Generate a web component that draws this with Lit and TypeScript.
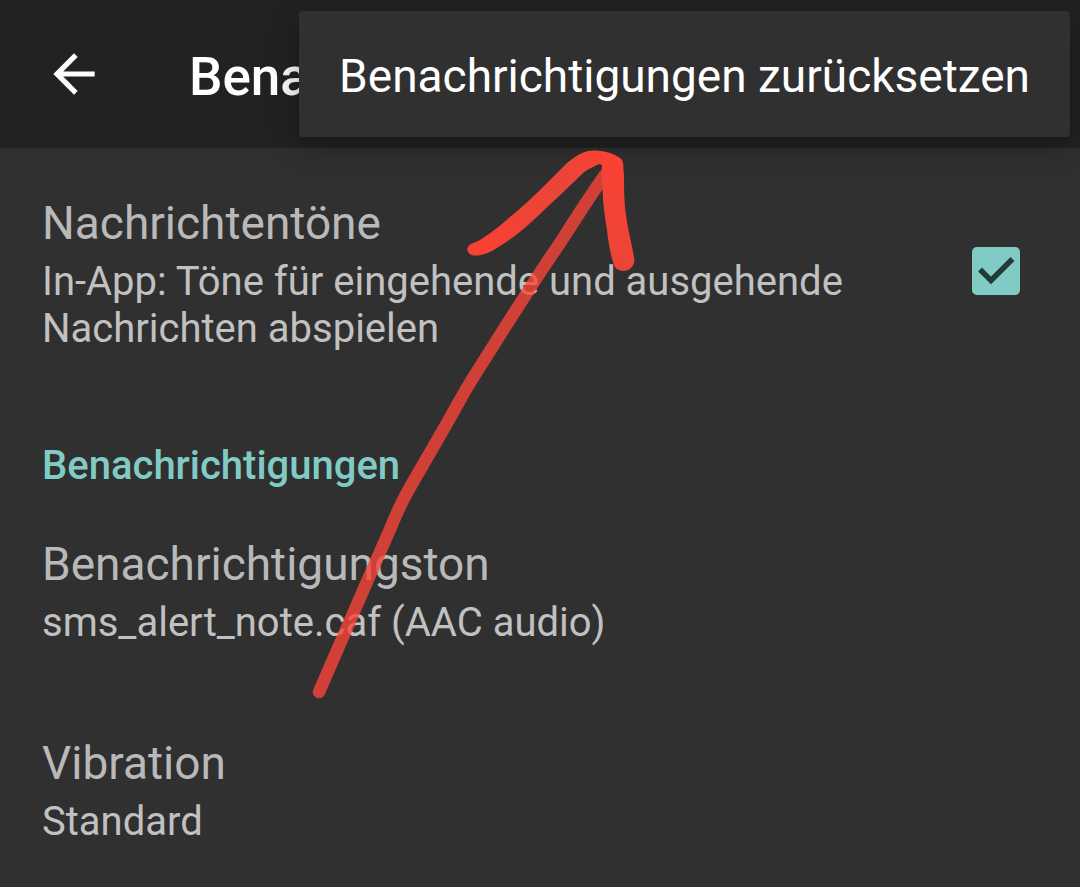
import { LitElement, html, css } from "lit";
import { customElement, property, state } from "lit/decorators.js";

@customElement("preference-text")
class PreferenceText extends LitElement {
  @property() heading = "";
  @property() summary = "";

  static styles = css`
    :host {
      display: flex;
      flex-direction: column;
      gap: 8px;
      flex: 1;
      min-width: 0;
    }
    .heading {
      font-size: 46px;
      line-height: 54px;
      color: #b9b9b9;
    }
    .summary {
      font-size: 40px;
      line-height: 47px;
      color: #c1c1c1;
    }
  `;

  render() {
    return html`
      <span class="heading">${this.heading}</span>
      <span class="summary">${this.summary}</span>
    `;
  }
}

@customElement("app-root")
class AppRoot extends LitElement {
  @state() private sounds = true;

  static styles = css`
    :host {
      display: block;
      position: relative;
      min-height: 100vh;
      background: #303030;
      color: #fff;
      font-family: Roboto, "Noto Sans", sans-serif;
    }
    button {
      border: 0;
      padding: 0;
      background: none;
      color: inherit;
      font: inherit;
      text-align: left;
      cursor: pointer;
    }
    .bar {
      display: flex;
      align-items: center;
      gap: 84px;
      height: 148px;
      padding: 0 43px;
      box-sizing: border-box;
      background: #222;
    }
    .back {
      display: flex;
    }
    .title {
      margin: 0;
      padding-top: 6px;
      font-size: 53px;
      line-height: 62px;
      font-weight: 500;
      white-space: nowrap;
    }
    .menu {
      position: absolute;
      top: 11px;
      right: 10px;
      z-index: 2;
      border-radius: 4px;
      background: #303030;
      box-shadow: 0 8px 32px rgba(0, 0, 0, 0.34);
    }
    .item {
      display: block;
      padding: 38px 40px 34px;
      font-size: 46px;
      line-height: 54px;
      white-space: nowrap;
    }
    .row {
      display: flex;
      align-items: center;
      gap: 60px;
      width: 100%;
      box-sizing: border-box;
      padding: 48px 60px 42px 42px;
      cursor: pointer;
    }
    .category {
      margin: 0;
      padding: 48px 42px 0;
      font-size: 40px;
      line-height: 47px;
      font-weight: 500;
      color: #80cbc4;
    }
    .box {
      display: grid;
      flex: none;
      padding-bottom: 6px;
    }
    .check,
    .tick {
      grid-area: 1 / 1;
      width: 48px;
      height: 48px;
      margin: 0;
    }
    .check {
      appearance: none;
      box-sizing: border-box;
      border: 5px solid #b9b9b9;
      border-radius: 5px;
      cursor: pointer;
    }
    .check:checked {
      border: 0;
      background: #80cbc4;
    }
    .tick {
      pointer-events: none;
      visibility: hidden;
    }
    .check:checked + .tick {
      visibility: visible;
    }
    .arrow {
      position: absolute;
      top: 140px;
      left: 300px;
      z-index: 3;
      pointer-events: none;
    }
  `;

  render() {
    return html`
      <header class="bar">
        <button class="back" aria-label="Zurück">
          <svg width="62" height="62" viewBox="0 0 24 24" fill="#fff">
            <path d="M20 11H7.83l5.59-5.59L12 4l-8 8 8 8 1.41-1.41L7.83 13H20v-2z" />
          </svg>
        </button>
        <h1 class="title">Benachrichtigungen</h1>
      </header>
      <div class="menu" role="menu">
        <button class="item" role="menuitem">Benachrichtigungen zurücksetzen</button>
      </div>

      <main>
        <label class="row" for="sounds">
          <preference-text
            heading="Nachrichtentöne"
            summary="In-App: Töne für eingehende und ausgehende Nachrichten abspielen"
          ></preference-text>
          <span class="box">
            <input
              id="sounds"
              class="check"
              type="checkbox"
              aria-label="Nachrichtentöne"
              .checked=${this.sounds}
              @change=${(e: Event) => (this.sounds = (e.target as HTMLInputElement).checked)}
            />
            <svg class="tick" viewBox="0 0 48 48">
              <path d="M8 22.5 19 33.5 40.5 12" fill="none" stroke="#223a38" stroke-width="5.4" />
            </svg>
          </span>
        </label>
        <h2 class="category">Benachrichtigungen</h2>
        <button class="row">
          <preference-text
            heading="Benachrichtigungston"
            summary="sms_alert_note.caf (AAC audio)"
          ></preference-text>
        </button>
        <button class="row">
          <preference-text heading="Vibration" summary="Standard"></preference-text>
        </button>
      </main>

      <svg class="arrow" width="350" height="570" viewBox="300 140 350 570" aria-hidden="true">
        <defs>
          <linearGradient id="head" gradientUnits="userSpaceOnUse" x1="470" y1="250" x2="610" y2="160">
            <stop offset="0" stop-color="#fb4132" />
            <stop offset="0.35" stop-color="#f04335" />
            <stop offset="0.7" stop-color="#ea4538" />
            <stop offset="1" stop-color="#f94233" />
          </linearGradient>
        </defs>
        <path
          d="M605 175 C590 196 576 218 562 240 L541 271 L500 335 C486 358 472 378 460 400 L446 425 L409 489 Q399 507 391 527 L366 584 L319 692"
          fill="none"
          stroke="#fa4538"
          stroke-opacity="0.8"
          stroke-width="12.5"
          stroke-linecap="round"
          stroke-linejoin="round"
        />
        <path
          d="M468 247 C470 243 475 243 480 240 C491 233 500 226 510 217 C520 209 530 200 540 190 L563 167 C569 161 574 157 580 154 C589 149 600 150 610 153 C615 155 620 157 622 160 C624 164 623 169 624 175 C624 186 624 197 625 207 C626 218 628 228 630 237 L634 257 C636 265 630 271 624 271 C617 271 614 267 613 262 C610 252 608 240 607 230 C605 219 604 209 603 200 C603 188 601 176 602 165 C599 163 596 166 593 167 C586 170 583 173 578 178 L557 198 C546 208 537 217 527 226 C519 233 511 239 503 244 C496 249 489 253 481 255 C476 256 471 256 469 253 C467 251 467 249 468 247Z"
          fill="url(#head)"
        />
      </svg>
    `;
  }
}
